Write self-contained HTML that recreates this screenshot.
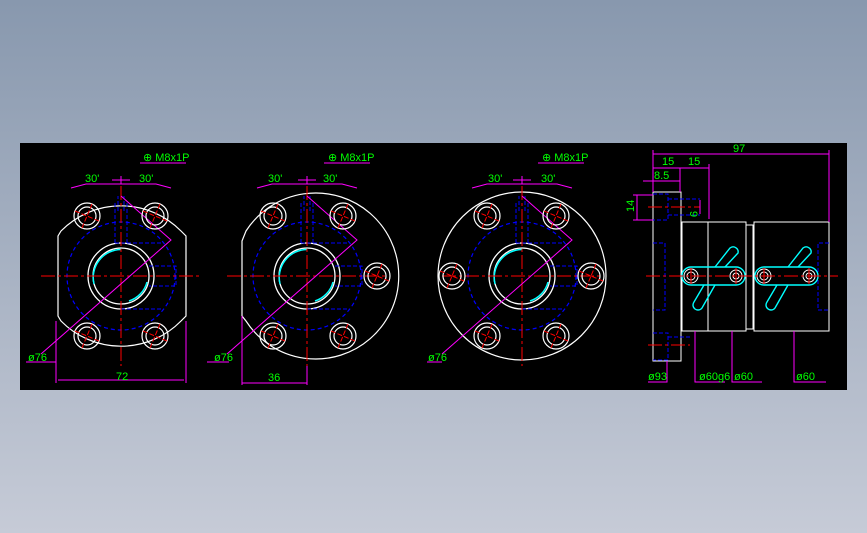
<!DOCTYPE html>
<html><head><meta charset="utf-8"><style>
html,body{margin:0;padding:0;width:867px;height:533px;overflow:hidden;background:linear-gradient(#8898ae,#c6cbd7);}
svg{position:absolute;left:0;top:0}
text{font-family:"Liberation Sans",sans-serif;font-size:11px;fill:#0f0}
.c{shape-rendering:crispEdges}
</style></head><body>
<svg width="867" height="533" viewBox="0 0 867 533">
<defs>
<g id="hole">
<circle r="13" fill="none" stroke="#fff" stroke-width="1.2"/>
<circle r="9" fill="none" stroke="#fff" stroke-width="1.2"/>
<path d="M-12 -5L12 5M-5 12L5 -12" stroke="#f00" stroke-width="1" stroke-dasharray="5 2"/>
</g>
<g id="core">
<circle r="54" fill="none" stroke="#00f" stroke-width="1.2" stroke-dasharray="4 3"/>
<circle r="33" fill="none" stroke="#fff" stroke-width="1.3"/>
<circle r="28" fill="none" stroke="#fff" stroke-width="1.3"/>
<path d="M-27 8A28 28 0 0 1 0 -26.5" fill="none" stroke="#0ff" stroke-width="1.5"/>
<path d="M26 6A27 27 0 0 1 8 25" fill="none" stroke="#0ff" stroke-width="1.5"/>
<path class="c" d="M-6 -33V-75M6 -33V-75M-3 -65V-80M3 -65V-80M-6 -33H40M28 -10H55V10H28M0 33H40" fill="none" stroke="#00f" stroke-dasharray="4 2"/>
<path class="c" d="M0 -90V90M-80 0H80" stroke="#f00" stroke-dasharray="14 3 3 3"/>
<path d="M-80 78L50 -36L0 -80" fill="none" stroke="#f0f"/>
<path d="M-50 -88L-35 -92H35L50 -88M-9 -96H9M0 -100V-92" fill="none" stroke="#f0f"/>
</g>
</defs>
<rect x="20" y="143" width="827" height="247" fill="#000"/>

<!-- view 1 -->
<g transform="translate(121 276)">
<path d="M-63 -40L-63 40L-60 45A84 84 0 0 0 60 45L65 40L65 -40L60 -45A84 84 0 0 0 -60 -45Z" fill="none" stroke="#fff" stroke-width="1.2"/>
<use href="#core"/>
<use href="#hole" x="-34" y="-60"/><use href="#hole" x="34" y="-60"/>
<use href="#hole" x="-34" y="60"/><use href="#hole" x="34" y="60"/>
<path class="c" d="M-65 45V107M65 45V107M-63 104H63M-65 86H-95" stroke="#f0f" fill="none"/>
</g>
<text x="85" y="182">30'</text><text x="139" y="182">30'</text>
<text x="143" y="161">⊕ M8x1P</text><line class="c" x1="140" y1="163" x2="186" y2="163" stroke="#f0f"/>
<text x="28" y="361">ø76</text><text x="116" y="380">72</text>

<!-- view 2 -->
<g transform="translate(307 276)">
<path d="M-65 -35L-61 -45A83 83 0 1 1 -61 45L-65 40Z" fill="none" stroke="#fff" stroke-width="1.2"/>
<use href="#core"/>
<use href="#hole" x="-34" y="-60"/><use href="#hole" x="36" y="-60"/>
<use href="#hole" x="-34" y="60"/><use href="#hole" x="36" y="60"/>
<use href="#hole" x="70" y="0"/>
<path class="c" d="M-65 40V109M0 90V109M-65 107H0M-78 86H-100" stroke="#f0f" fill="none"/>
</g>
<text x="268" y="182">30'</text><text x="323" y="182">30'</text>
<text x="328" y="161">⊕ M8x1P</text><line class="c" x1="324" y1="163" x2="370" y2="163" stroke="#f0f"/>
<text x="214" y="361">ø76</text><text x="268" y="381">36</text>

<!-- view 3 -->
<g transform="translate(522 276)">
<circle r="84" fill="none" stroke="#fff" stroke-width="1.2"/>
<use href="#core"/>
<use href="#hole" x="-35" y="-60"/><use href="#hole" x="34" y="-60"/>
<use href="#hole" x="-35" y="60"/><use href="#hole" x="34" y="60"/>
<use href="#hole" x="-70" y="0"/><use href="#hole" x="69" y="0"/>
<path class="c" d="M-80 86H-95" stroke="#f0f"/>
</g>
<text x="488" y="182">30'</text><text x="541" y="182">30'</text>
<text x="542" y="161">⊕ M8x1P</text><line class="c" x1="538" y1="163" x2="584" y2="163" stroke="#f0f"/>
<text x="428" y="361">ø76</text>

<!-- view 4 -->
<g fill="none" stroke="#fff" stroke-width="1.2" class="c">
<rect x="653" y="192" width="28" height="169"/>
<rect x="682" y="222" width="64" height="109"/>
<line x1="708" y1="222" x2="708" y2="331"/>
<rect x="746" y="225" width="7" height="104"/>
<rect x="754" y="222" width="75" height="109"/>
</g>
<g fill="none" stroke="#00f" stroke-dasharray="4 2" class="c">
<path d="M653 194H668V220H653M668 199H700M668 215H700M653 243H665V310H653M829 243H818V310H829M653 333H668V360H653M668 337H690"/>
</g>
<g fill="none" stroke="#0ff" stroke-width="1.4">
<path d="M691 267H736A9 9 0 0 1 736 285H691A9 9 0 0 1 691 267Z"/>
<path d="M715 267L730 248A5 5 0 0 1 738 253L725 267M704 285L694 302A5 5 0 0 0 702 308L715 285"/>
<path d="M764 267H809A9 9 0 0 1 809 285H764A9 9 0 0 1 764 267Z"/>
<path d="M788 267L803 248A5 5 0 0 1 811 253L798 267M777 285L767 302A5 5 0 0 0 775 308L788 285"/>
</g>
<g fill="none" stroke="#fff">
<circle cx="691" cy="276" r="7"/><circle cx="691" cy="276" r="4"/><circle cx="736" cy="276" r="6"/><circle cx="736" cy="276" r="3"/>
<circle cx="764" cy="276" r="7"/><circle cx="764" cy="276" r="4"/><circle cx="809" cy="276" r="6"/><circle cx="809" cy="276" r="3"/>
</g>
<path class="c" d="M646 276H838M648 207H700M648 345H690" stroke="#f00" stroke-dasharray="14 3 3 3"/>
<path class="c" d="M691 268V284M736 268V284M764 268V284M809 268V284" stroke="#f00"/>
<g stroke="#f0f" fill="none" class="c">
<path d="M653 154H829M829 150V222M653 150V192M653 168H709M709 164V219M680 168V192M643 181H680M637 195V220M633 195H653M633 220H653M700 200V214M667 361V382H648M695 331V382H725M732 331V382H762M794 331V382H826"/>
</g>
<text x="733" y="152">97</text><text x="662" y="165">15</text><text x="688" y="165">15</text>
<text x="654" y="179">8.5</text><text x="634" y="212" transform="rotate(-90 634 212)">14</text>
<text x="690" y="211" transform="rotate(90 690 211)">9</text>
<text x="648" y="380">ø93</text><text x="699" y="380">ø60g6</text><text x="734" y="380">ø60</text><text x="796" y="380">ø60</text>
</svg>
</body></html>
